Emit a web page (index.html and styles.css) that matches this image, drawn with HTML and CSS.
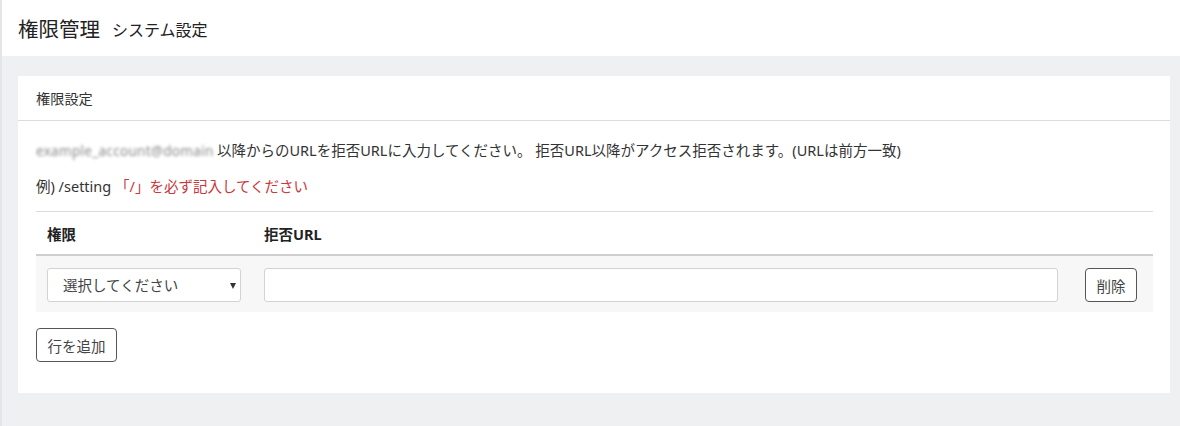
FILE: index.html
```html
<!DOCTYPE html>
<html lang="ja">
<head>
<meta charset="utf-8">
<title>権限管理</title>
<link rel="stylesheet" href="styles.css">
</head>
<body>
<header class="topbar">
  <h1 class="title">権限管理</h1>
  <span class="subtitle">システム設定</span>
</header>
<main class="content">
  <section class="card">
    <div class="card-head">権限設定</div>
    <div class="card-body">
      <p class="note"><span class="blurred">example_account@domain</span>以降からのURLを拒否URLに入力してください。 拒否URL以降がアクセス拒否されます。(URLは前方一致)</p>
      <p class="note example">例) /setting <span class="warn">「/」を必ず記入してください</span></p>
      <div class="table">
        <div class="row head">
          <div class="cell c1">権限</div>
          <div class="cell c2">拒否URL</div>
          <div class="cell c3"></div>
        </div>
        <div class="row body">
          <div class="cell c1">
            <div class="select-wrap">
              <select class="select"><option>選択してください</option></select>
            </div>
          </div>
          <div class="cell c2"><input class="input" type="text"></div>
          <div class="cell c3"><button class="btn">削除</button></div>
        </div>
      </div>
      <button class="btn add">行を追加</button>
    </div>
  </section>
</main>
</body>
</html>
```
FILE: styles.css
```css
html, body {
  margin: 0;
  padding: 0;
}
body {
  background: #eef0f2;
  font-family: "Noto Sans", "Noto Sans CJK JP", sans-serif;
  color: #333;
  font-size: 14.5px;
  border-left: 2px solid #e4e5e8;
  height: 426px;
  box-sizing: border-box;
}
.topbar {
  background: #fff;
  height: 56px;
  display: flex;
  align-items: center;
  padding-left: 16px;
  gap: 12px;
}
.title {
  margin: 0;
  font-size: 20.5px;
  font-weight: 400;
  color: #222;
}
.subtitle {
  font-size: 16px;
  color: #222;
  padding-top: 1px;
}
.content {
  padding: 20px 10px 0 16px;
}
.card {
  background: #fff;
  height: 317px;
  box-sizing: border-box;
}
.card-head {
  height: 44px;
  display: flex;
  align-items: center;
  padding: 0 18px;
  border-bottom: 1px solid #dcdcdc;
  font-size: 14.2px;
  color: #333;
}
.card-body {
  padding: 18px 17px 0 18px;
}
.note {
  margin: 0;
  line-height: 22px;
  font-size: 14.5px;
  color: #333;
}
.example {
  margin-top: 13px;
}
.blurred {
  color: #8a8a8a;
  filter: blur(1.4px);
  letter-spacing: 0.3px;
  display: inline-block;
  width: 181px;
  font-size: 13.5px;
}
.warn {
  color: #c9383d;
}
.table {
  margin-top: 14px;
  border-top: 1px solid #dcdcdc;
}
.row {
  display: grid;
  grid-template-columns: 216px 1fr 83px;
}
.row.head {
  height: 42px;
  align-items: center;
  border-bottom: 2px solid #cfcfcf;
  font-weight: 700;
  color: #222;
}
.row.head .c1 { padding-left: 11px; }
.row.head .c2 { padding-left: 12px; }
.row.body {
  background: #f7f7f7;
  padding: 12px 0 10px;
  align-items: center;
}
.row.body .c1 { padding-left: 11px; padding-right: 11px; }
.row.body .c2 { padding-left: 12px; padding-right: 12px; }
.row.body .c3 { padding-left: 15px; }
.select-wrap {
  position: relative;
  width: 194px;
}
.select-wrap::after {
  content: "";
  position: absolute;
  right: 5px;
  top: 15px;
  border-left: 3px solid transparent;
  border-right: 3px solid transparent;
  border-top: 6px solid #333;
}
.select {
  appearance: none;
  -webkit-appearance: none;
  width: 194px;
  height: 34px;
  box-sizing: border-box;
  border: 1px solid #d3d3d3;
  border-radius: 3px;
  background: #fff;
  padding: 0 0 0 15px;
  font-family: "Noto Sans", "Noto Sans CJK JP", sans-serif;
  font-size: 14.5px;
  color: #444;
}
.input {
  width: 100%;
  height: 34px;
  box-sizing: border-box;
  border: 1px solid #d3d3d3;
  border-radius: 3px;
  background: #fff;
  display: block;
}
.btn {
  height: 34px;
  box-sizing: border-box;
  border: 1px solid #555;
  border-radius: 4px;
  background: #fff;
  font-family: "Noto Sans", "Noto Sans CJK JP", sans-serif;
  font-size: 14.5px;
  color: #444;
  padding: 0 11px;
  cursor: pointer;
}
.row.body .btn {
  width: 52px;
  padding: 0;
}
.add {
  margin-top: 16px;
  width: 81px;
  padding: 0;
}
```
